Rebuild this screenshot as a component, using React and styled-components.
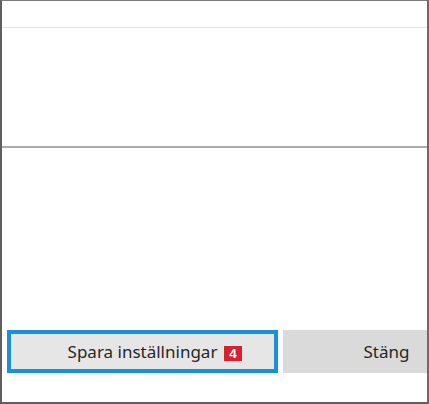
import styled, { createGlobalStyle } from "styled-components";

const GlobalStyle = createGlobalStyle`
  html, body {
    margin: 0;
    padding: 0;
    background: #ffffff;
  }
  body {
    font-family: "Noto Sans", "Open Sans", sans-serif;
  }
`;

function App() {
  return (
    <>
      <GlobalStyle />
      <Frame>
        <Header />
        <Content />
        <Footer>
          <SaveButton>
            Spara inställningar
            <Badge>4</Badge>
          </SaveButton>
          <CloseButton>Stäng</CloseButton>
        </Footer>
      </Frame>
    </>
  );
}

export default App;

const Frame = styled.div`
  width: 429px;
  height: 404px;
  box-sizing: border-box;
  border-top: 1px solid #7a7a7a;
  border-left: 2px solid #5f5f5f;
  border-right: 2px solid #6a6a6a;
  border-bottom: 2px solid #5f5f5f;
  display: flex;
  flex-direction: column;
  overflow: hidden;
  background: #ffffff;
`;

const Header = styled.div`
  height: 26px;
  border-bottom: 1px solid #e4e4e4;
  flex-shrink: 0;
`;

const Content = styled.div`
  height: 118px;
  border-bottom: 2px solid #ababab;
  flex-shrink: 0;
`;

const Footer = styled.div`
  flex: 1;
  display: flex;
  align-items: flex-end;
  gap: 5px;
  padding: 0 0 29px 5px;
`;

const ButtonBase = styled.button`
  position: relative;
  flex-shrink: 0;
  height: 43px;
  box-sizing: border-box;
  font-family: "Noto Sans", "Open Sans", sans-serif;
  font-size: 17px;
  color: #262626;
  cursor: pointer;
  padding: 0;
  margin: 0;
`;

const SaveButton = styled(ButtonBase)`
  width: 271px;
  background: #e6e6e6;
  border: 4px solid #1592d8;
`;

const CloseButton = styled(ButtonBase)`
  width: 207px;
  background: #d9dad9;
  border: none;
`;

const Badge = styled.span`
  position: absolute;
  left: 213px;
  top: 12px;
  width: 18px;
  height: 15px;
  background: #d2232f;
  color: #ffffff;
  font-family: "Liberation Sans", Arial, sans-serif;
  font-weight: 700;
  font-size: 13.5px;
  line-height: 15px;
  text-align: center;
`;
